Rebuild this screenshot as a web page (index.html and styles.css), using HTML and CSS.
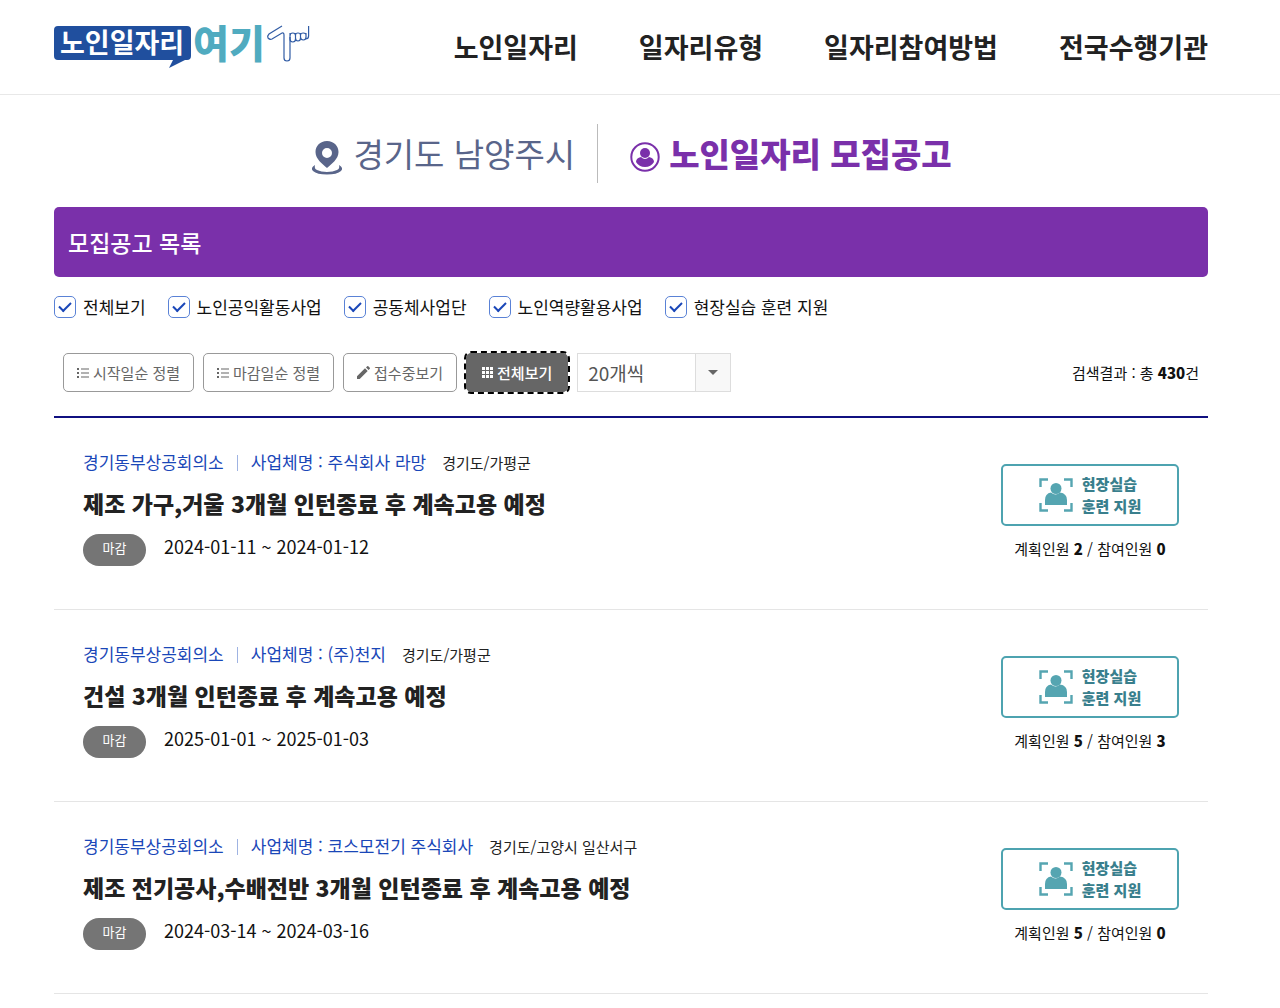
FILE: index.html
```
<!DOCTYPE html>
<html lang="ko">
<head>
  <meta charset="UTF-8">
  <meta name="viewport" content="width=device-width, initial-scale=1.0">
  <title>노인일자리 모집공고</title>
  <link rel="stylesheet" href="styles.css">
</head>
<body>
  <!-- shared icons -->
  <svg class="sprite" aria-hidden="true">
    <symbol id="icon-list" viewBox="0 0 12 10">
      <path d="M0 0h2v2H0zM0 4h2v2H0zM0 8h2v2H0zM4 .4h8v1.2H4zM4 4.400h8v1.200H4zM4 8.400h8v1.200H4z"/>
    </symbol>
    <symbol id="icon-trainee" viewBox="0 0 34 34">
      <path d="M1.500 9V1.500H9M25 1.500h7.500V9M1.500 25v7.500H9M25 32.500h7.500V25" fill="none" stroke="currentColor" stroke-width="2.400"/>
      <circle cx="17" cy="10.500" r="5.500"/>
      <path d="M6 27v-5q0-6.500 6-7.500 4.500 4 9 0 7 1 7 7.500v5z"/>
    </symbol>
  </svg>

  <header class="header">
    <a class="logo" href="#" aria-label="노인일자리 여기">
      <svg width="256" height="72" viewBox="0 -13 256 72">
        <path d="M4 2h129q4 0 4 4v26q0 4-4 4h-2l-16 8 4-8H4q-4 0-4-4V6q0-4 4-4z" fill="#204f9e"/>
        <text class="logo-main" x="6" y="29">노인일자리</text>
        <text class="logo-sub" x="139" y="34">여기</text>
        <g fill="none" stroke="#315ca5" stroke-width="1.200">
          <path d="M228 2l-13 8q-2 2-1 4 2 2 4 1l10-6q2-.5 2 2v23q0 3 3 3t3-3V13"/>
          <path d="M236 12q0-3 2.800-3t2.700 3v3q0 3-2.700 3T236 15zM241.500 11q0-2 2.500-2t2.500 2v3q0 3-2.500 3t-2.500-3M246.500 11q0-2 2.800-2t2.700 2v2q0 3-2.700 3t-2.800-3M254.600 2v10q0 3-3 3M236 9v6M241.500 9v6M246.500 9v5M252 9v5"/>
        </g>
      </svg>
    </a>
    <nav class="nav">
      <a href="#">노인일자리</a>
      <a href="#">일자리유형</a>
      <a href="#">일자리참여방법</a>
      <a href="#">전국수행기관</a>
    </nav>
  </header>

  <main class="container">
    <div class="page-title">
      <p class="region">
        <svg width="34" height="36" viewBox="0 0 34 36">
          <path d="M17 2C10 2 5.500 7 5.500 13c0 7 7 12 11.500 16 4.500-4 11.500-9 11.500-16C28.500 7 24 2 17 2zm0 7a5 5 0 1 1 0 10 5 5 0 0 1 0-10z" fill="#59658a" fill-rule="evenodd"/>
          <path d="M5 26q-5 3-2 6 4 3.500 14 3.500T31 32q3-3-2-6 1 4-2 5-4 2-10 2T7 31q-3-1-2-5z"/>
        </svg>
        경기도 남양주시
      </p>
      <h1>
        <svg width="30" height="30" viewBox="0 0 30 30">
          <circle cx="15" cy="15" r="13.700" fill="none" stroke="#7a30aa" stroke-width="2"/>
          <circle cx="15" cy="11" r="5"/>
          <path d="M6 20q0-4 5-5 4 4 8 0 5 1 5 5-3 5-9 5t-9-5z"/>
        </svg>
        노인일자리 모집공고
      </h1>
    </div>

    <h2 class="banner">모집공고 목록</h2>

    <div class="filters">
      <label><input type="checkbox" checked>전체보기</label>
      <label><input type="checkbox" checked>노인공익활동사업</label>
      <label><input type="checkbox" checked>공동체사업단</label>
      <label><input type="checkbox" checked>노인역량활용사업</label>
      <label><input type="checkbox" checked>현장실습 훈련 지원</label>
    </div>

    <div class="toolbar">
      <button type="button" class="btn"><svg width="12" height="10"><use href="#icon-list"/></svg>시작일순 정렬</button>
      <button type="button" class="btn"><svg width="12" height="10"><use href="#icon-list"/></svg>마감일순 정렬</button>
      <button type="button" class="btn">
        <svg width="13" height="13" viewBox="0 0 13 13"><path d="M0 10.300L8 2.300 10.700 5l-8 8H0zM9 1.400L10.200.2q.6-.4 1.100 0l1.500 1.500q.4.5 0 1.100L11.600 4z"/></svg>접수중보기
      </button>
      <button type="button" class="btn active">
        <svg width="11" height="11" viewBox="0 0 11 11"><path d="M0 0h3v3H0zM4 0h3v3H4zM8 0h3v3H8zM0 4h3v3H0zM4 4h3v3H4zM8 4h3v3H8zM0 8h3v3H0zM4 8h3v3H4zM8 8h3v3H8z"/></svg>전체보기
      </button>
      <div class="page-size">
        <select aria-label="목록 개수">
          <option>20개씩</option>
          <option>50개씩</option>
        </select>
        <span class="arrow"></span>
      </div>
      <p class="total">검색결과 : 총 <strong>430</strong>건</p>
    </div>

    <ul class="job-list">
      <li class="job">
        <div class="job-info">
          <p class="company"><span>경기동부상공회의소</span><i></i><span>사업체명 : 주식회사 라망</span><small>경기도/가평군</small></p>
          <h3><a href="#">제조 가구,거울 3개월 인턴종료 후 계속고용 예정</a></h3>
          <p class="period"><span class="badge">마감</span>2024-01-11 ~ 2024-01-12</p>
        </div>
        <div class="job-type">
          <p class="type"><svg width="34" height="34"><use href="#icon-trainee"/></svg><span>현장실습<br>훈련 지원</span></p>
          <p class="count">계획인원 <strong>2</strong> / 참여인원 <strong>0</strong></p>
        </div>
      </li>
      <li class="job">
        <div class="job-info">
          <p class="company"><span>경기동부상공회의소</span><i></i><span>사업체명 : (주)천지</span><small>경기도/가평군</small></p>
          <h3><a href="#">건설 3개월 인턴종료 후 계속고용 예정</a></h3>
          <p class="period"><span class="badge">마감</span>2025-01-01 ~ 2025-01-03</p>
        </div>
        <div class="job-type">
          <p class="type"><svg width="34" height="34"><use href="#icon-trainee"/></svg><span>현장실습<br>훈련 지원</span></p>
          <p class="count">계획인원 <strong>5</strong> / 참여인원 <strong>3</strong></p>
        </div>
      </li>
      <li class="job">
        <div class="job-info">
          <p class="company"><span>경기동부상공회의소</span><i></i><span>사업체명 : 코스모전기 주식회사</span><small>경기도/고양시 일산서구</small></p>
          <h3><a href="#">제조 전기공사,수배전반 3개월 인턴종료 후 계속고용 예정</a></h3>
          <p class="period"><span class="badge">마감</span>2024-03-14 ~ 2024-03-16</p>
        </div>
        <div class="job-type">
          <p class="type"><svg width="34" height="34"><use href="#icon-trainee"/></svg><span>현장실습<br>훈련 지원</span></p>
          <p class="count">계획인원 <strong>5</strong> / 참여인원 <strong>0</strong></p>
        </div>
      </li>
    </ul>
  </main>
</body>
</html>
```
FILE: styles.css
```
* {
  box-sizing: border-box;
}

body {
  margin: 0;
  font-family: "Noto Sans CJK KR", sans-serif;
  font-size: 15px;
  color: #111;
  background-color: #fff;
}

h1, h2, h3, p, ul {
  margin: 0;
  padding: 0;
}

a {
  color: inherit;
  text-decoration: none;
}

svg {
  fill: currentColor;
  flex-shrink: 0;
}

.sprite {
  position: absolute;
  width: 0;
  height: 0;
}

/* header */
.header {
  display: flex;
  justify-content: space-between;
  align-items: center;
  height: 95px;
  padding: 0 72px 0 54px;
  border-bottom: 1px solid #e8e8e8;
}

.logo svg {
  display: block;
}

.logo-main {
  font-size: 27px;
  font-weight: 700;
  fill: #fff;
}

.logo-sub {
  font-size: 39px;
  font-weight: 900;
  fill: #50abc0;
}

.nav {
  display: flex;
  gap: 61px;
  font-size: 27px;
  font-weight: 700;
  line-height: 40px;
  color: #222;
}

/* title */
.container {
  padding: 29px 72px 0 54px;
}

.page-title {
  display: flex;
  justify-content: center;
  height: 59px;
  margin-bottom: 24px;
  font-size: 33px;
  line-height: 59px;
}

.page-title svg {
  margin-top: 7px;
}

.region {
  display: flex;
  align-items: center;
  gap: 9px;
  padding-right: 22px;
  border-right: 1px solid #bbb;
  color: #59658a;
}

.page-title h1 {
  display: flex;
  align-items: center;
  gap: 9px;
  padding-left: 32px;
  font-size: 33px;
  font-weight: 900;
  color: #7a30aa;
}

.banner {
  padding: 0 14px;
  border-radius: 5px;
  background-color: #7a30aa;
  color: #fff;
  font-size: 23px;
  font-weight: 500;
  line-height: 70px;
}

/* filters */
.filters {
  display: flex;
  gap: 22px;
  margin-top: 17px;
  font-size: 17px;
  line-height: 26px;
}

.filters label {
  display: flex;
  align-items: center;
  gap: 7px;
}

.filters input {
  appearance: none;
  display: grid;
  place-items: center;
  width: 22px;
  height: 22px;
  margin: 0;
  border: 1px solid #5a82d6;
  border-radius: 5px;
}

.filters input:checked::before {
  content: "";
  box-sizing: border-box;
  width: 12px;
  height: 7px;
  margin-bottom: 4px;
  border: solid #1a47b8;
  border-width: 0 0 2px 2px;
  transform: rotate(-45deg);
}

.toolbar {
  display: flex;
  align-items: center;
  gap: 9px;
  margin-top: 33px;
  padding: 0 9px;
}

.btn {
  display: flex;
  align-items: center;
  gap: 4px;
  height: 39px;
  padding: 0 13px;
  border: 1px solid #999;
  border-radius: 5px;
  background-color: #fff;
  color: #666;
  font-family: inherit;
  font-size: 15px;
}

.btn.active {
  padding: 0 15px;
  border-color: #666;
  background-color: #666;
  color: #fff;
  font-weight: 500;
  outline: 2px dashed #000;
}

.page-size {
  position: relative;
}

.page-size select {
  appearance: none;
  display: block;
  width: 154px;
  height: 39px;
  padding: 0 10px;
  border: 1px solid #ddd;
  border-radius: 0;
  background-color: #fff;
  color: #555;
  font-family: inherit;
  font-size: 19px;
}

.page-size .arrow {
  position: absolute;
  top: 1px;
  right: 1px;
  bottom: 1px;
  display: grid;
  place-items: center;
  width: 35px;
  border-left: 1px solid #ddd;
  background-color: #f8f8f8;
  pointer-events: none;
}

.page-size .arrow::before {
  content: "";
  border: 5px solid transparent;
  border-top-color: #666;
  border-bottom: 0;
}

.total {
  margin-left: auto;
}

/* job list */
.job-list {
  margin-top: 24px;
  border-top: 2px solid #101080;
  list-style: none;
}

.job {
  display: flex;
  justify-content: space-between;
  padding: 28px 29px 43px;
  border-bottom: 1px solid #e5e5e5;
}

.company {
  display: flex;
  align-items: baseline;
  font-size: 17px;
  line-height: 32px;
  color: #1a47b8;
}

.company i {
  align-self: center;
  width: 1px;
  height: 16px;
  margin: 0 13px;
  background-color: #9fb3e2;
}

.company small {
  margin-left: 16px;
  font-size: 15px;
  color: #222;
}

.job h3 {
  margin-top: 4px;
  font-size: 23px;
  font-weight: 900;
  line-height: 40px;
  color: #222;
}

.period {
  display: flex;
  gap: 18px;
  margin-top: 11px;
  font-size: 18px;
  line-height: 24px;
}

.badge {
  width: 63px;
  height: 32px;
  border-radius: 16px;
  background-color: #757575;
  color: #fff;
  font-size: 13px;
  line-height: 28px;
  text-align: center;
}

.job-type {
  width: 178px;
  padding-top: 18px;
  text-align: center;
}

.type {
  display: flex;
  align-items: center;
  justify-content: center;
  gap: 9px;
  height: 62px;
  border: 2px solid #4da3b0;
  border-radius: 5px;
  color: #55a5b1;
}

.type span {
  color: #397f8d;
  font-size: 15px;
  font-weight: 900;
  line-height: 22px;
  text-align: left;
}

.count {
  margin-top: 11px;
  line-height: 24px;
}

.count strong, .total strong {
  font-weight: 900;
}
```
